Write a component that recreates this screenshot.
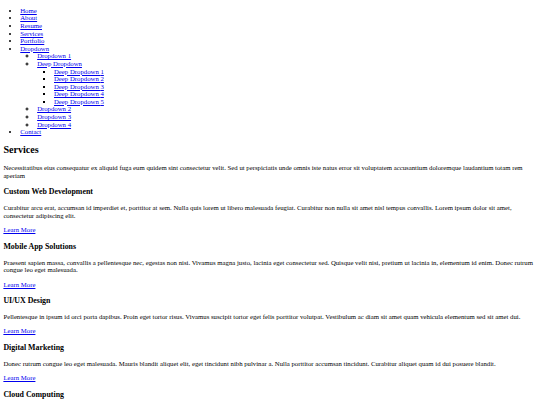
const NAV = ['Home', 'About', 'Resume', 'Services', 'Portfolio'];

const SERVICES = [
  {
    title: 'Custom Web Development',
    text: 'Curabitur arcu erat, accumsan id imperdiet et, porttitor at sem. Nulla quis lorem ut libero malesuada feugiat. Curabitur non nulla sit amet nisl tempus convallis. Lorem ipsum dolor sit amet, consectetur adipiscing elit.',
  },
  {
    title: 'Mobile App Solutions',
    text: 'Praesent sapien massa, convallis a pellentesque nec, egestas non nisi. Vivamus magna justo, lacinia eget consectetur sed. Quisque velit nisi, pretium ut lacinia in, elementum id enim. Donec rutrum congue leo eget malesuada.',
  },
  {
    title: 'UI/UX Design',
    text: 'Pellentesque in ipsum id orci porta dapibus. Proin eget tortor risus. Vivamus suscipit tortor eget felis porttitor volutpat. Vestibulum ac diam sit amet quam vehicula elementum sed sit amet dui.',
  },
  {
    title: 'Digital Marketing',
    text: 'Donec rutrum congue leo eget malesuada. Mauris blandit aliquet elit, eget tincidunt nibh pulvinar a. Nulla porttitor accumsan tincidunt. Curabitur aliquet quam id dui posuere blandit.',
  },
  {
    title: 'Cloud Computing',
    text: 'Vivamus magna justo, lacinia eget consectetur sed, convallis at tellus. Sed porttitor lectus nibh. Cras ultricies ligula sed magna dictum porta. Nulla quis lorem ut libero malesuada feugiat.',
  },
];

function Link({ children }: { children: React.ReactNode }) {
  return (
    <a href="#" className="text-[#0000ee] underline">
      {children}
    </a>
  );
}

export default function App() {
  return (
    <div className="m-[0.5em] text-[6.75px] leading-[1.125] text-black font-['Liberation_Serif',serif]">
      <header>
        <nav>
          <ul className="list-disc pl-[2.5em] my-[1em]">
            {NAV.map((n) => (
              <li key={n}>
                <Link>{n}</Link>
              </li>
            ))}
            <li>
              <Link>Dropdown</Link>
              <ul className="list-[circle] pl-[2.5em]">
                <li>
                  <Link>Dropdown 1</Link>
                </li>
                <li>
                  <Link>Deep Dropdown</Link>
                  <ul className="list-[square] pl-[2.5em]">
                    {[1, 2, 3, 4, 5].map((i) => (
                      <li key={i}>
                        <Link>Deep Dropdown {i}</Link>
                      </li>
                    ))}
                  </ul>
                </li>
                <li>
                  <Link>Dropdown 2</Link>
                </li>
                <li>
                  <Link>Dropdown 3</Link>
                </li>
                <li>
                  <Link>Dropdown 4</Link>
                </li>
              </ul>
            </li>
            <li>
              <Link>Contact</Link>
            </li>
          </ul>
        </nav>
      </header>

      <section>
        <h2 className="text-[1.5em] leading-[1.15] font-bold my-[0.83em]">Services</h2>
        <p className="my-[1em]">
          Necessitatibus eius consequatur ex aliquid fuga eum quidem sint consectetur velit. Sed ut perspiciatis unde omnis iste natus error sit voluptatem accusantium doloremque laudantium totam rem aperiam
        </p>
        {SERVICES.map((s) => (
          <div key={s.title}>
            <h3 className="text-[1.17em] leading-[1.15] font-bold my-[1em]">{s.title}</h3>
            <p className="my-[1em]">{s.text}</p>
            <Link>Learn More</Link>
          </div>
        ))}
      </section>
    </div>
  );
}
